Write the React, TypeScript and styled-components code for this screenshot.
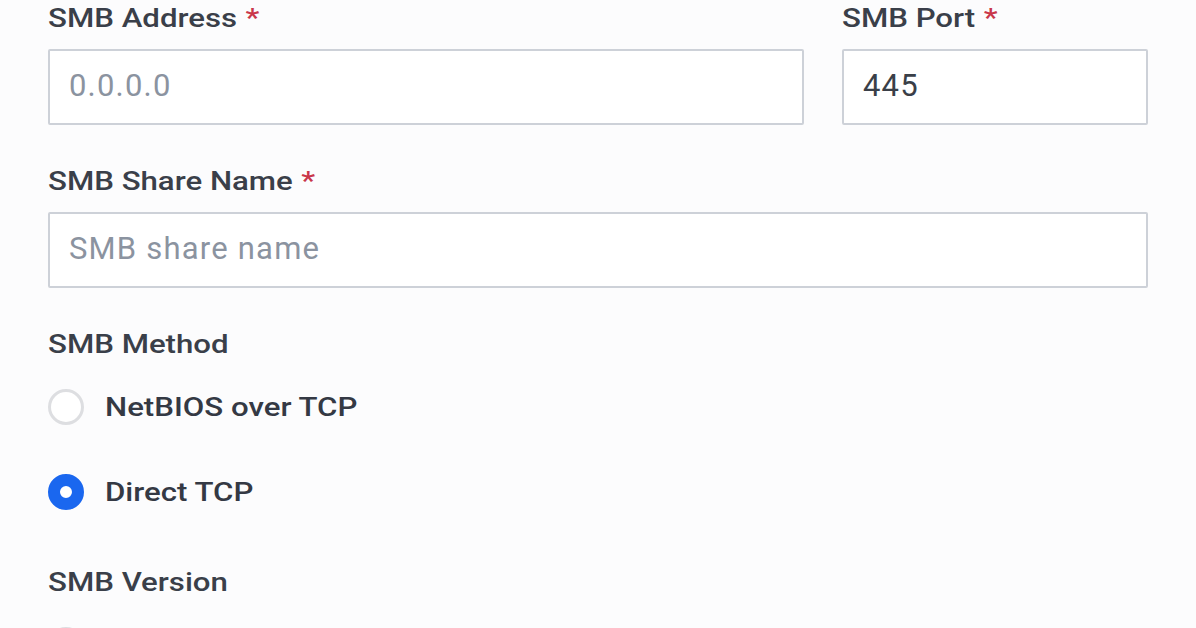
import React from "react";
import styled, { createGlobalStyle } from "styled-components";

const GlobalStyle = createGlobalStyle`
  html, body {
    margin: 0;
    padding: 0;
    background: #fcfcfd;
    font-family: Roboto, "Liberation Sans", sans-serif;
  }
`
const Form = styled.div`
  width: 1100px;
  padding: 3px 0 0 48px;
  display: flex;
  flex-direction: column;
`
const Row = styled.div`
  display: grid;
  grid-template-columns: 1fr 306px;
  column-gap: 38px;
`
const Field = styled.div`
  display: flex;
  flex-direction: column;
  margin-bottom: 41px;
`
const Label = styled.label`
  font-size: 26px;
  line-height: 30px;
  font-weight: 500;
  color: #3a3f49;
  margin-bottom: 16px;
`
// the screenshot's type is set a little wide, so stretch it horizontally
const Wide = styled.span`
  display: inline-block;
  white-space: nowrap;
  transform: scaleX(1.2);
  transform-origin: left center;
`
const Required = styled.span`
  color: #c9374a;
  margin-left: 7px;
`
const Input = styled.input`
  box-sizing: border-box;
  height: 76px;
  width: 100%;
  border: 2px solid #cdd1d8;
  border-radius: 2px;
  background: #ffffff;
  padding: 0 18px 3px 19px;
  font-family: Roboto, "Liberation Sans", sans-serif;
  font-size: 31px;
  letter-spacing: 1.2px;
  color: #3a3f48;
  outline: none;

  &::placeholder {
    color: #8b93a0;
  }
`
const RadioGroup = styled.div`
  display: flex;
  flex-direction: column;
  gap: 49px;
  margin-top: 14px;
  margin-bottom: 57px;
`
const RadioRow = styled.label`
  display: flex;
  align-items: center;
  gap: 21px;
  font-size: 26px;
  line-height: 36px;
  font-weight: 500;
  color: #343944;
`
const RadioDot = styled.span<{ $checked?: boolean }>`
  box-sizing: border-box;
  width: 36px;
  height: 36px;
  border-radius: 50%;
  flex-shrink: 0;
  background: #ffffff;
  border: ${p => p.$checked ? "12px solid #1a67ef" : "3px solid #dddee1"};
`

const Radio = (props: { label: string, checked?: boolean }) => (
  <RadioRow>
    <RadioDot $checked={props.checked} />
    <Wide>{props.label}</Wide>
  </RadioRow>
)

const FieldLabel = (props: { text: string, required?: boolean }) => (
  <Label>
    <Wide>
      {props.text}
      {props.required && <Required>*</Required>}
    </Wide>
  </Label>
)

const App = () => {
  return (
    <>
      <GlobalStyle />
      <Form>
        <Row>
          <Field>
            <FieldLabel text="SMB Address" required />
            <Input placeholder="0.0.0.0" />
          </Field>
          <Field>
            <FieldLabel text="SMB Port" required />
            <Input defaultValue="445" />
          </Field>
        </Row>
        <Field>
          <FieldLabel text="SMB Share Name" required />
          <Input placeholder="SMB share name" />
        </Field>
        <FieldLabel text="SMB Method" />
        <RadioGroup>
          <Radio label="NetBIOS over TCP" />
          <Radio label="Direct TCP" checked />
        </RadioGroup>
        <FieldLabel text="SMB Version" />
        <RadioGroup>
          <Radio label="SMB 2.0" />
        </RadioGroup>
      </Form>
    </>
  );
}

export default App;
